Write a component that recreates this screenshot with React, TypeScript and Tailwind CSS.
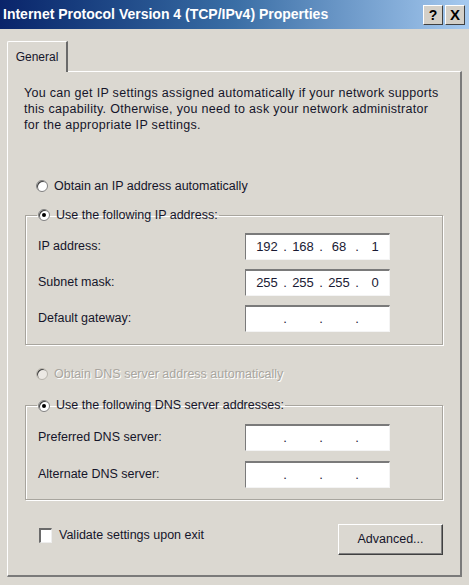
import React from "react";

const font = { fontFamily: '"Liberation Sans", Arial, sans-serif' };

function Radio({ checked, disabled }: { checked?: boolean; disabled?: boolean }) {
  return (
    <span
      className={`relative inline-block w-[12px] h-[12px] rounded-full border ${
        disabled ? "border-[#b8b4ac] bg-[#ece9e4]" : "border-[#808080] bg-white"
      } shadow-[inset_1px_1px_0_#404040]`}
    >
      {checked && (
        <span className="absolute left-[3px] top-[3px] w-[4px] h-[4px] rounded-full bg-black" />
      )}
    </span>
  );
}

function IpBox({ value }: { value: string[] }) {
  return (
    <div className="w-[145px] h-[27px] bg-white border-t-2 border-l border-[#7a7a7a] border-r border-b border-r-[#f4f4f4] border-b-[#f4f4f4] flex items-center pl-[7px] text-[13px] text-[#1a1a33]">
      {value.map((v, i) => (
        <React.Fragment key={i}>
          <span className="w-[28px] text-center">{v}</span>
          {i < 3 && <span className="w-[8px] text-center">.</span>}
        </React.Fragment>
      ))}
    </div>
  );
}

function Row({ label, value }: { label: string; value: string[] }) {
  return (
    <div className="flex items-center justify-between">
      <span>{label}</span>
      <IpBox value={value} />
    </div>
  );
}

export default function App() {
  const empty = ["", "", "", ""];
  return (
    <div
      className="w-[469px] h-[585px] bg-[#dbd8d1] text-[12.5px] text-[#15152a] overflow-hidden flex flex-col"
      style={font}
    >
      {/* title bar */}
      <div className="h-[29px] flex items-center justify-between pl-[3px] pr-[4px] bg-gradient-to-r from-[#0a246a] via-[#3a6ea5] to-[#a6caf0]">
        <span className="text-white font-bold text-[14px]">
          Internet Protocol Version 4 (TCP/IPv4) Properties
        </span>
        <div className="flex gap-[2px]">
          <span className="w-[20px] h-[20px] flex items-center justify-center bg-[#d4d0c8] border border-t-white border-l-white border-r-[#404040] border-b-[#404040] font-bold text-[14px] text-black leading-none">
            ?
          </span>
          <span className="w-[20px] h-[20px] flex items-center justify-center bg-[#d4d0c8] border border-t-white border-l-white border-r-[#404040] border-b-[#404040] font-bold text-[15px] text-black leading-none">
            X
          </span>
        </div>
      </div>

      {/* tabs */}
      <div className="px-[7px] pt-[12px] flex flex-col flex-1 pb-[8px]">
        <div className="flex">
          <div className="h-[31px] w-[61px] flex items-center justify-center bg-[#dbd8d1] border-t border-l border-white border-r-2 border-r-[#6a6a6a] rounded-tl-[2px] relative z-10 mb-[-1px]">
            <span className="text-[12px]">General</span>
          </div>
        </div>
        <div className="flex-1 border-t border-l border-white border-r-2 border-b-2 border-r-[#7a7a7a] border-b-[#7a7a7a] pl-[16px] pr-[16px] pt-[13px]">
          <p className="leading-[16px] tracking-[0.3px]">
            You can get IP settings assigned automatically if your network supports
            <br />
            this capability. Otherwise, you need to ask your network administrator
            <br />
            for the appropriate IP settings.
          </p>

          <label className="flex items-center gap-[6px] mt-[44px] pl-[12px]">
            <Radio />
            <span>Obtain an IP address automatically</span>
          </label>

          <fieldset className="mt-[10px] border border-[#a8a59e] shadow-[inset_1px_1px_0_#ffffff,1px_1px_0_#ffffff] w-[418px] ml-[1px] px-[12px] pt-[8px] pb-[12px]">
            <legend className="flex items-center gap-[6px] ml-[-1px] px-[1px]">
              <Radio checked />
              <span>Use the following IP address:</span>
            </legend>
            <div className="flex flex-col gap-[9px] pr-[40px]">
              <Row label="IP address:" value={["192", "168", "68", "1"]} />
              <Row label="Subnet mask:" value={["255", "255", "255", "0"]} />
              <Row label="Default gateway:" value={empty} />
            </div>
          </fieldset>

          <label className="flex items-center gap-[6px] mt-[20px] pl-[12px] text-[#a9a6a0] [text-shadow:1px_1px_0_#ffffff]">
            <Radio disabled />
            <span>Obtain DNS server address automatically</span>
          </label>

          <fieldset className="mt-[13px] border border-[#a8a59e] shadow-[inset_1px_1px_0_#ffffff,1px_1px_0_#ffffff] w-[418px] ml-[1px] px-[12px] pt-[9px] pb-[11px]">
            <legend className="flex items-center gap-[6px] ml-[-1px] px-[1px]">
              <Radio checked />
              <span>Use the following DNS server addresses:</span>
            </legend>
            <div className="flex flex-col gap-[10px] pr-[40px]">
              <Row label="Preferred DNS server:" value={empty} />
              <Row label="Alternate DNS server:" value={empty} />
            </div>
          </fieldset>

          <div className="flex items-start justify-between mt-[24px] pl-[15px] w-[419px]">
            <label className="flex items-center gap-[7px] mt-[2px]">
              <span className="w-[13px] h-[15px] bg-white border-t-2 border-l-2 border-[#6a6a6a] border-r border-b border-r-[#eeeeee] border-b-[#eeeeee]" />
              <span>Validate settings upon exit</span>
            </label>
            <button className="w-[105px] h-[31px] bg-[#dbd8d1] border border-t-white border-l-white border-r-[#404040] border-b-[#404040] shadow-[inset_-1px_-1px_0_#808080]">
              Advanced...
            </button>
          </div>
        </div>
      </div>
    </div>
  );
}
